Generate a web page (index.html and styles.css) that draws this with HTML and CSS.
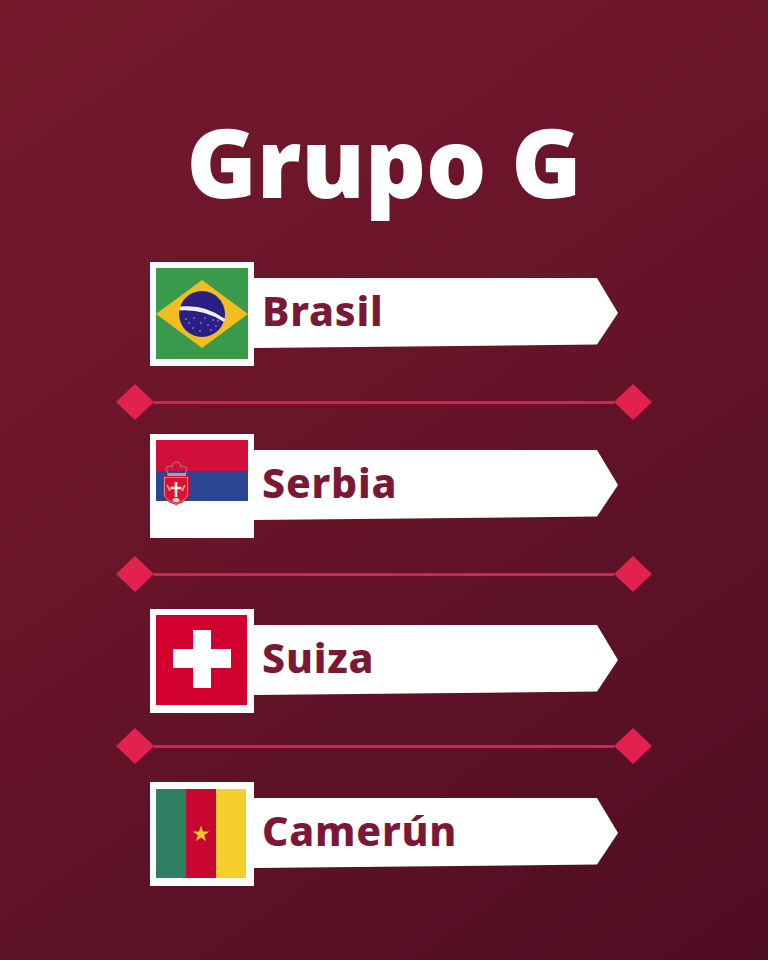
FILE: index.html
```html
<!DOCTYPE html>
<html lang="es">
<head>
<meta charset="utf-8">
<title>Grupo G</title>
<link rel="stylesheet" href="styles.css">
</head>
<body>
<main class="page">
  <h1 class="title">Grupo G</h1>
  <section class="list">
    <div class="row row-a">
      <div class="flag">
        <svg class="flag-art" viewBox="0 0 92 92">
          <rect width="92" height="91" fill="#3a9a4b"/>
          <polygon points="0,46 46,12 92,46 46,80" fill="#f2bd22"/>
          <circle cx="46" cy="46" r="23" fill="#2a1f84"/>
          <path d="M24 38.500 Q50 36 69 51 L68 54 Q48 41 23.300 42.500 Z" fill="#f1eef2"/>
          <g fill="#d9d5ee">
            <circle cx="33" cy="55" r=".7"/><circle cx="38" cy="50" r=".7"/><circle cx="45" cy="55" r=".7"/>
            <circle cx="49" cy="50" r=".7"/><circle cx="55" cy="62" r=".7"/><circle cx="60" cy="58" r=".7"/>
            <circle cx="44" cy="63" r=".7"/><circle cx="52" cy="57" r=".7"/><circle cx="30" cy="51" r=".7"/>
            <circle cx="62" cy="53" r=".7"/><circle cx="37" cy="60" r=".7"/><circle cx="57" cy="52" r=".7"/>
          </g>
        </svg>
      </div>
      <div class="bar"><span class="name">Brasil</span></div>
    </div>
    <div class="sep sep-a"><i class="gem"></i><i class="line"></i><i class="gem"></i></div>

    <div class="row row-a">
      <div class="flag">
        <svg class="flag-art" viewBox="0 0 92 92">
          <rect width="92" height="92" fill="#fff"/>
          <rect width="92" height="31" fill="#d0103a"/>
          <rect y="31" width="92" height="30" fill="#2c4591"/>
          <path d="M12 34 L10 28 Q14 25 16 27 Q17 22 20.500 22 Q24 22 25 27 Q27 25 31 28 L29 34 Z" fill="none" stroke="#c65a68" stroke-width="1.300"/>
          <path d="M11.500 33 H30 V36 H11.500 Z" fill="#a8a0a8"/>
          <path d="M7 36 H33 V54 Q33 61 20 65 Q7 61 7 54 Z" fill="#d8122f"/>
          <path d="M8.500 37.500 H31.500 V54 Q31.500 60 20 63.500 Q8.500 60 8.500 54 Z" fill="none" stroke="#eec9c9" stroke-width=".6"/>
          <path d="M20 42 V57 M14.500 48 H25.500" stroke="#f6eeee" stroke-width="2.600"/>
          <path d="M11 45 L14 51 M29 45 L26 51" stroke="#e7bcbc" stroke-width="1.500"/>
          <ellipse cx="20" cy="60" rx="3.500" ry="2" fill="#e8d0d0"/>
        </svg>
      </div>
      <div class="bar"><span class="name">Serbia</span></div>
    </div>
    <div class="sep sep-b"><i class="gem"></i><i class="line"></i><i class="gem"></i></div>

    <div class="row row-b">
      <div class="flag">
        <svg class="flag-art" viewBox="0 0 92 92">
          <rect width="91" height="90" fill="#d1002e"/>
          <path d="M37 15 H55 V34 H75 V53 H55 V73 H37 V53 H17 V34 H37 Z" fill="#fff"/>
        </svg>
      </div>
      <div class="bar"><span class="name">Suiza</span></div>
    </div>
    <div class="sep sep-a sep-c"><i class="gem"></i><i class="line"></i><i class="gem"></i></div>

    <div class="row">
      <div class="flag">
        <svg class="flag-art" viewBox="0 0 92 92">
          <rect y="1" width="30" height="89" fill="#2f7f62"/>
          <rect x="30" y="1" width="30" height="89" fill="#c8062f"/>
          <rect x="60" y="1" width="30" height="89" fill="#f6cf2d"/>
          <polygon points="45,37.500 47,43.500 53.300,43.500 48.200,47.300 50.100,53.300 45,49.600 39.900,53.300 41.800,47.300 36.700,43.500 43,43.500" fill="#f5c431"/>
        </svg>
      </div>
      <div class="bar"><span class="name">Camerún</span></div>
    </div>
  </section>
</main>
</body>
</html>
```
FILE: styles.css
```css
* { box-sizing: border-box; }
html, body { margin: 0; padding: 0; }
body { width: 768px; height: 960px; overflow: hidden; }

.page {
  width: 768px;
  height: 960px;
  padding-top: 99px;
  background: linear-gradient(145deg, #741a2b 0%, #6c152a 35%, #5e1227 65%, #4f0d21 100%);
  font-family: "Open Sans", "Noto Sans", sans-serif;
}

.title {
  margin: 0;
  height: 163px;
  color: #fff;
  font-size: 95px;
  line-height: 124px;
  font-weight: 800;
  text-align: center;
  letter-spacing: 0;
}

.list {
  width: 536px;
  margin-left: 116px;
  display: flex;
  flex-direction: column;
}

.row {
  display: flex;
  align-items: center;
  padding-left: 34px;
  height: 104px;
}

.flag {
  width: 104px;
  height: 104px;
  flex: none;
  padding: 6px;
  background: #fff;
}

.flag-art { display: block; width: 92px; height: 92px; }

.bar {
  width: 364px;
  height: 70px;
  margin-top: -2px;
  padding-left: 8px;
  padding-bottom: 5px;
  display: flex;
  align-items: center;
  background: #fff;
  clip-path: polygon(0 0, 343px 0, 100% 35px, 343px 66.500px, 0 100%);
}

.name {
  color: #7a1836;
  font-size: 41px;
  line-height: 1;
  font-weight: 800;
  letter-spacing: 0.8px;
  font-family: "Noto Sans", "Open Sans", sans-serif;
}

.row-a { margin-bottom: 18px; }
.row-b { margin-bottom: 15px; }

.sep {
  display: flex;
  align-items: center;
  height: 36px;
}
.sep-a { margin-bottom: 14px; }
.sep-b { margin-bottom: 17px; }
.sep-c { margin-bottom: 18px; }

.gem {
  display: block;
  flex: none;
  width: 38px;
  height: 36px;
  background: #e2214f;
  clip-path: polygon(50% 0, 100% 50%, 50% 100%, 0 50%);
}

.line {
  display: block;
  flex: 1;
  height: 3px;
  background: #dc1f4e;
}
```
